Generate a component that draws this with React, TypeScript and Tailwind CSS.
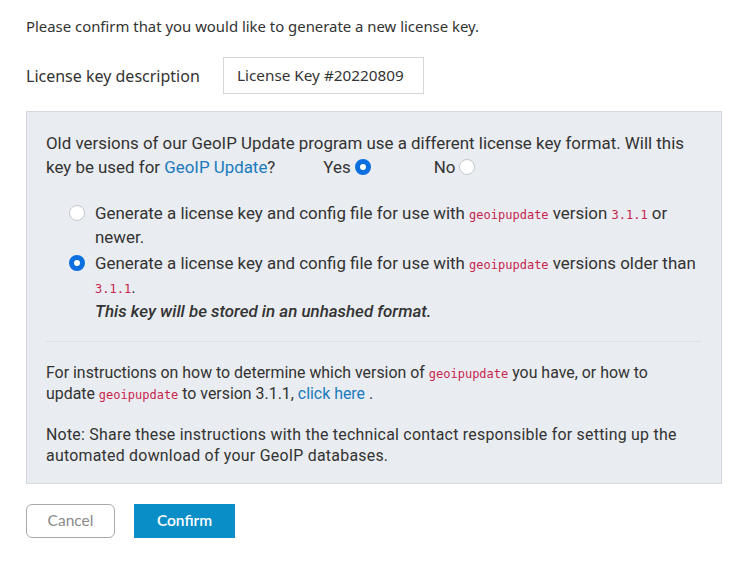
import React from "react";

function Radio({ checked }: { checked?: boolean }) {
  return checked ? (
    <span className="inline-block w-[16px] h-[16px] rounded-full border-[5px] border-[#0b6fe0] bg-white align-[-2px]" />
  ) : (
    <span className="inline-block w-[16px] h-[16px] rounded-full border border-[#c4c8cd] bg-white align-[-2px]" />
  );
}

function Code({ children }: { children: React.ReactNode }) {
  return (
    <code className="text-[12px] leading-none text-[#c7254e] font-['DejaVu_Sans_Mono',monospace]">{children}</code>
  );
}

export default function App() {
  return (
    <div className="w-[756px] h-[567px] bg-white text-[#333] font-['Noto_Sans',sans-serif] px-[26px] pt-[14px]">
      <p className="text-[14.9px] leading-[24px]">
        Please confirm that you would like to generate a new license key.
      </p>

      <div className="flex items-center mt-[19px]">
        <span className="text-[16px] w-[197px]">License key description</span>
        <div className="w-[201px] h-[37px] border border-[#d6d6d6] flex items-center pl-[13px] text-[15.3px] whitespace-nowrap">
          License Key #20220809
        </div>
      </div>

      {/* Panel */}
      <div className="mt-[17px] w-[696px] bg-[#e9ecf0] border border-[#d5d9df] px-[19px] pt-[19px] pb-[17px] font-['Roboto',sans-serif]">
        <p className="text-[16.9px] leading-[24px]">
          Old versions of our GeoIP Update program use a different license key format. Will this
          <br />
          key be used for <span className="text-[#1a7bbd]">GeoIP Update</span>?
          <span className="ml-[48px]">Yes</span>
          <span className="ml-[4px]"><Radio checked /></span>
          <span className="ml-[63px]">No</span>
          <span className="ml-[4px]"><Radio /></span>
        </p>

        <div className="mt-[22px] pl-[23px] text-[16.9px] leading-[24px]">
          <div className="flex">
            <span className="w-[26px] shrink-0 leading-[24px]"><Radio /></span>
            <span>
              Generate a license key and config file for use with <Code>geoipupdate</Code> version{" "}
              <Code>3.1.1</Code> or
              <br />
              newer.
            </span>
          </div>
          <div className="flex mt-[2px]">
            <span className="w-[26px] shrink-0 leading-[24px]"><Radio checked /></span>
            <span>
              Generate a license key and config file for use with <Code>geoipupdate</Code> versions older than
              <br />
              <Code>3.1.1</Code>.
              <br />
              <em className="font-medium">This key will be stored in an unhashed format.</em>
            </span>
          </div>
        </div>

        <div className="mt-[18px] border-t border-[#dde1e6]" />

        <p className="mt-[20px] text-[15.9px] leading-[21px]">
          For instructions on how to determine which version of <Code>geoipupdate</Code> you have, or how to
          <br />
          update <Code>geoipupdate</Code> to version 3.1.1, <span className="text-[#1a7bbd]">click here</span> .
        </p>
        <p className="mt-[20px] text-[15.9px] leading-[21px] tracking-[0.25px]">
          Note: Share these instructions with the technical contact responsible for setting up the
          <br />
          automated download of your GeoIP databases.
        </p>
      </div>

      <div className="flex gap-[19px] mt-[20px] font-['Lato',sans-serif]">
        <button className="w-[89px] h-[34px] border border-[#a9a9a9] rounded-[6px] text-[15.5px] text-[#8a8a8a] bg-white">
          Cancel
        </button>
        <button className="w-[101px] h-[34px] bg-[#0a8ec8] text-white text-[15.5px] font-semibold">
          Confirm
        </button>
      </div>
    </div>
  );
}
